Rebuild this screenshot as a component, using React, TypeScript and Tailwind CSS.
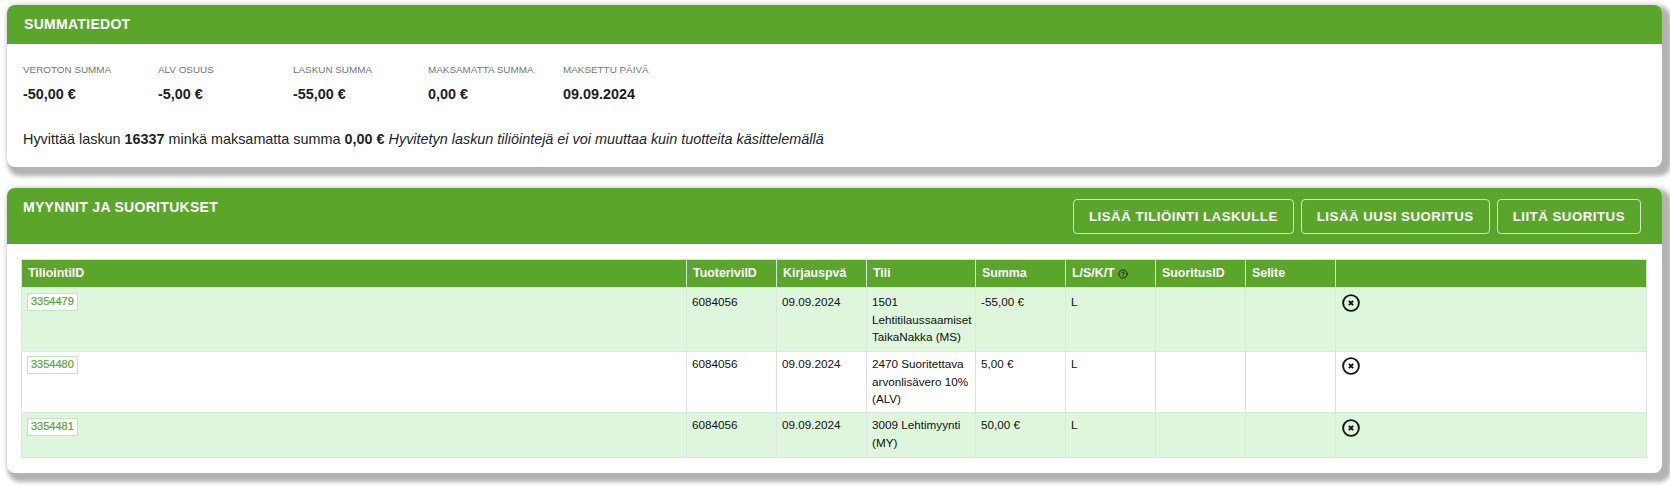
import { CircleHelp } from "lucide-react";

const stats = [
  { label: "Veroton summa", value: "-50,00 €" },
  { label: "ALV osuus", value: "-5,00 €" },
  { label: "Laskun summa", value: "-55,00 €" },
  { label: "Maksamatta summa", value: "0,00 €" },
  { label: "Maksettu päivä", value: "09.09.2024" },
];

// row paddings differ a bit in the original table
const rows = [
  { id: "3354479", tuote: "6084056", pvm: "09.09.2024", tili: "1501 Lehtitilaussaamiset TaikaNakka (MS)", summa: "-55,00 €", tyyppi: "L", h: "h-[64px]", bg: "bg-[#def6db]", pad: "pt-[5px]", badgePad: "pt-[5px]", iconPad: "pt-[6px]" },
  { id: "3354480", tuote: "6084056", pvm: "09.09.2024", tili: "2470 Suoritettava arvonlisävero 10% (ALV)", summa: "5,00 €", tyyppi: "L", h: "h-[61px]", bg: "bg-white", pad: "pt-[3px]", badgePad: "pt-[4px]", iconPad: "pt-[5px]" },
  { id: "3354481", tuote: "6084056", pvm: "09.09.2024", tili: "3009 Lehtimyynti (MY)", summa: "50,00 €", tyyppi: "L", h: "h-[45px]", bg: "bg-[#def6db]", pad: "pt-[3px]", badgePad: "pt-[5px]", iconPad: "pt-[6px]" },
];

const headers = ["TiliointiID", "TuoterivilD", "Kirjauspvä", "Tili", "Summa", "L/S/K/T", "SuoritusID", "Selite", ""];
const buttons = ["Lisää tiliöinti laskulle", "Lisää uusi suoritus", "Liitä suoritus"];

function RemoveIcon() {
  return (
    <svg width="18" height="18" viewBox="0 0 18 18" fill="none" stroke="#151515" className="block">
      <circle cx="9" cy="9" r="7.9" strokeWidth="1.9" />
      <path d="M6.9 6.9l4.2 4.2M11.1 6.9l-4.2 4.2" strokeWidth="2" />
    </svg>
  );
}

export default function App() {
  return (
    <div className="h-[487px] overflow-hidden bg-white pt-[5px] pr-[8px] pl-[7px] font-['Liberation_Sans',Arial,sans-serif] text-[#212529]">
      <section className="rounded-[8px] bg-white shadow-[5px_5px_4px_4px_#b3b3b3,0_0_6px_#d8d8d8]">
        <header className="flex h-[39px] items-center rounded-t-[8px] bg-[#5aa62b] pl-[17px] text-[14px] font-bold uppercase tracking-[0.3px] text-white">
          Summatiedot
        </header>
        <div className="pt-[19px] pr-[15px] pb-[18px] pl-[16px]">
          <div className="flex">
            {stats.map((s) => (
              <div key={s.label} className="w-[135px]">
                <div className="text-[9.9px] uppercase leading-[14px] text-[#777777]">{s.label}</div>
                <div className="mt-[8px] text-[14.4px] font-bold leading-[18px] text-[#212121]">{s.value}</div>
              </div>
            ))}
          </div>
          <p className="mt-[26px] text-[14.4px] leading-[20px]">
            Hyvittää laskun <b>16337</b> minkä maksamatta summa <b>0,00 €</b>{" "}
            <i>Hyvitetyn laskun tiliöintejä ei voi muuttaa kuin tuotteita käsittelemällä</i>
          </p>
        </div>
      </section>

      <section className="mt-[21px] rounded-[8px] bg-white pb-[15px] shadow-[5px_5px_4px_4px_#b3b3b3,0_0_6px_#d8d8d8]">
        <header className="flex h-[56px] items-start justify-between rounded-t-[8px] bg-[#5aa62b] pr-[21px] pl-[16px] text-white">
          <h2 className="mt-[10px] text-[14px] font-bold uppercase leading-[18px] tracking-[0.3px]">Myynnit ja suoritukset</h2>
          <div className="mt-[11px] flex gap-[7px]">
            {buttons.map((b) => (
              <button key={b} className="h-[35px] rounded-[4px] border border-[#d5e6cb] px-[15px] text-[13.3px] font-bold uppercase tracking-[0.48px] text-white">
                {b}
              </button>
            ))}
          </div>
        </header>
        <div className="mt-[15px] px-[14px]">
          <table className="w-[1626px] table-fixed border-collapse text-[11.7px] leading-[17.5px] text-[#111111]">
            <colgroup>
              <col className="w-[665px]" />
              <col className="w-[90px]" />
              <col className="w-[90px]" />
              <col className="w-[109px]" />
              <col className="w-[90px]" />
              <col className="w-[90px]" />
              <col className="w-[90px]" />
              <col className="w-[90px]" />
              <col />
            </colgroup>
            <thead>
              <tr className="h-[28px] bg-[#5aa62b] text-[12.4px] text-white">
                {headers.map((h, i) => (
                  <th key={i} className="border border-[#d6e3ea] pt-[1px] pr-[5px] pl-[6px] text-left align-middle font-bold">
                    {h}
                    {h === "L/S/K/T" && <CircleHelp size={10} strokeWidth={2.2} className="ml-[3px] inline text-[#1a1a1a]" />}
                  </th>
                ))}
              </tr>
            </thead>
            <tbody>
              {rows.map((r) => (
                <tr key={r.id} className={`${r.h} ${r.bg}`}>
                  <td className={`border border-[#dde3e6] px-[5px] align-top ${r.badgePad}`}>
                    <span className="block h-[18px] w-fit border border-[#bfe9c2] bg-white px-[3px] text-[11px] leading-[15px] text-[#5aa62b] [-webkit-text-stroke:0.2px_#5aa62b]">{r.id}</span>
                  </td>
                  <td className={`border border-[#dde3e6] px-[5px] align-top ${r.pad}`}>{r.tuote}</td>
                  <td className={`border border-[#dde3e6] px-[5px] align-top ${r.pad}`}>{r.pvm}</td>
                  <td className={`border border-[#dde3e6] px-[5px] align-top ${r.pad}`}>{r.tili}</td>
                  <td className={`border border-[#dde3e6] px-[5px] align-top ${r.pad}`}>{r.summa}</td>
                  <td className={`border border-[#dde3e6] px-[5px] align-top ${r.pad}`}>{r.tyyppi}</td>
                  <td className="border border-[#dde3e6] px-[5px]"></td>
                  <td className="border border-[#dde3e6] px-[5px]"></td>
                  <td className={`border border-[#dde3e6] px-[6px] align-top ${r.iconPad}`}>
                    <RemoveIcon />
                  </td>
                </tr>
              ))}
            </tbody>
          </table>
        </div>
      </section>
    </div>
  );
}
